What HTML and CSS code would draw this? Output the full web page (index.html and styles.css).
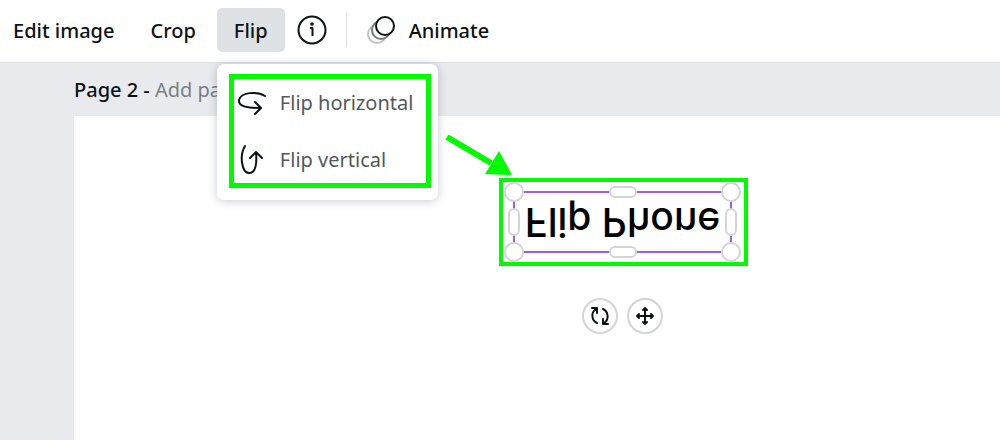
FILE: index.html
```
<!DOCTYPE html>
<html lang="en">
<head>
  <meta charset="UTF-8">
  <title>Flip Phone - Editor</title>
  <link rel="stylesheet" href="styles.css">
</head>
<body>
  <header class="toolbar">
    <button class="tool">Edit image</button>
    <button class="tool">Crop</button>
    <div class="dropdown">
      <button class="tool active" aria-expanded="true">Flip</button>
      <!-- Flip menu -->
      <div class="menu">
        <div class="menu-list">
          <button class="menu-item">
            <svg width="32" height="32" viewBox="0 0 32 32">
              <path d="M29 9C21 4 5 5 3 13C2 20 13 21 24 21M19 15L25 21L19 27"/>
            </svg>
            Flip horizontal
          </button>
          <button class="menu-item">
            <svg width="32" height="32" viewBox="0 0 32 32">
              <path d="M9 2C3 12 6 29 13 29C20 29 21 19 20 8M14 14L20 8L26 14"/>
            </svg>
            Flip vertical
          </button>
        </div>
      </div>
    </div>
    <button class="info" aria-label="Info">
      <svg width="30" height="30" viewBox="0 0 30 30">
        <circle cx="15" cy="15" r="13.5"/>
        <path class="stem" d="M13 13H15.5V21"/>
        <circle class="dot" cx="15" cy="9" r="1.8"/>
      </svg>
    </button>
    <span class="divider"></span>
    <button class="animate">
      <svg width="30" height="30" viewBox="0 0 30 30">
        <circle class="trail-far" cx="10" cy="19" r="9"/>
        <circle class="trail" cx="14" cy="15" r="9"/>
        <circle class="front" cx="18" cy="11" r="9"/>
      </svg>
      Animate
    </button>
  </header>

  <main class="workspace">
    <p class="page-title">Page 2 - <span>Add page title</span></p>
    <div class="page">
      <svg class="arrow" width="70" height="50" viewBox="0 0 70 50">
        <path d="M5 3L49 29" stroke="#00fb00" stroke-width="6"/>
        <path d="M57 17L70 41L43 40Z" fill="#00fb00"/>
      </svg>
      <div class="highlight">
        <div class="selection">
          <span class="flipped">Flip Phone</span>
          <i class="handle corner top left"></i>
          <i class="handle corner top right"></i>
          <i class="handle corner bottom left"></i>
          <i class="handle corner bottom right"></i>
          <i class="handle wide top"></i>
          <i class="handle wide bottom"></i>
          <i class="handle tall left"></i>
          <i class="handle tall right"></i>
        </div>
      </div>
      <div class="actions">
        <button class="round" aria-label="Rotate">
          <svg width="20" height="20" viewBox="0 0 20 20">
            <path d="M7 17C1 14 1 6 6 3M2 2H7V7M13 3C19 6 19 14 14 17M18 18H13V13"/>
          </svg>
        </button>
        <button class="round" aria-label="Move">
          <svg width="20" height="20" viewBox="0 0 20 20">
            <path d="M10 2V18M2 10H18M8 4L10 2L12 4M8 16L10 18L12 16M4 8L2 10L4 12M16 8L18 10L16 12"/>
          </svg>
        </button>
      </div>
    </div>
  </main>
</body>
</html>
```
FILE: styles.css
```
* {
  box-sizing: border-box;
}
body {
  margin: 0;
  height: 100vh;
  display: flex;
  flex-direction: column;
  padding-bottom: 2px;
  overflow: hidden;
  background: #fff;
  color: #0d1216;
  font-family: "Noto Sans", sans-serif;
  font-size: 20px;
}
button {
  border: none;
  background: none;
  padding: 0;
  color: inherit;
  font: inherit;
  white-space: nowrap;
  cursor: pointer;
}
svg {
  display: block;
  flex: none;
  fill: none;
  stroke: #0d1216;
  stroke-width: 2;
  stroke-linecap: round;
  stroke-linejoin: round;
}

/* Toolbar */
.toolbar {
  display: flex;
  align-items: center;
  padding: 8px 13px 10px;
  background: #fff;
  font-weight: 500;
}
.tool {
  height: 44px;
  border-radius: 5px;
  margin-right: 36px;
}
.active {
  padding: 0 17px;
  margin: 0 12px 0 -15px;
  background: #dfe2e5;
}
.dropdown {
  position: relative;
}
.stem {
  stroke-linecap: butt;
}
.dot {
  fill: #0d1216;
  stroke: none;
}
.divider {
  width: 1px;
  height: 34px;
  margin: 0 20px 0 19px;
  background: #dcdee1;
}
.animate {
  display: flex;
  align-items: center;
  gap: 12px;
}
.animate circle {
  fill: #fff;
}
.animate .trail-far {
  stroke: #bfc1c2;
}
.animate .trail {
  stroke: #777a7c;
}

/* Flip menu */
.menu {
  position: absolute;
  z-index: 2;
  top: 56px;
  left: -15px;
  padding: 10px 7px 12px 12px;
  border-radius: 7px;
  background: #fff;
  box-shadow: 0 1px 10px rgba(40, 50, 70, 0.25);
}
.menu-list {
  display: flex;
  flex-direction: column;
  gap: 10px;
  border: 5px solid #00fb00;
}
.menu-item {
  display: flex;
  align-items: center;
  gap: 12px;
  width: 100%;
  height: 47px;
  padding: 0 13px 0 2px;
  color: #55585b;
  font-weight: 400;
}

/* Workspace */
.workspace {
  flex: 1;
  display: flex;
  flex-direction: column;
  padding-left: 74px;
  background: #e9eaee;
  border-top: 1px solid #dfe0e4;
}
.page-title {
  margin: 0;
  line-height: 53px;
  font-weight: 500;
}
.page-title span {
  color: #7b7e82;
  font-weight: 400;
}
.page {
  flex: 1;
  position: relative;
  background: #fff;
}

/* Objects placed on the page */
.arrow {
  position: absolute;
  top: 18px;
  left: 368px;
  stroke: none;
  stroke-linecap: butt;
}
.highlight {
  position: absolute;
  top: 62px;
  left: 425px;
  padding: 9px 12px 9px 10px;
  border: 4px solid #00fb00;
}
.selection {
  position: relative;
  width: 219px;
  height: 62px;
  border: 2px solid #9563e0;
  text-align: center;
}
.flipped {
  display: block;
  color: #000;
  font-family: Inter, sans-serif;
  font-size: 39px;
  font-weight: 500;
  line-height: 58px;
  white-space: nowrap;
  transform: scaleY(-1);
}
.handle {
  position: absolute;
  border: 2px solid #d3d4d9;
  border-radius: 10px;
  background: #fff;
}
.corner {
  width: 20px;
  height: 20px;
}
.wide {
  width: 28px;
  height: 12px;
  left: calc(50% - 14px);
}
.tall {
  width: 12px;
  height: 28px;
  top: calc(50% - 14px);
}
.corner.top {
  top: -11px;
}
.corner.bottom {
  bottom: -11px;
}
.corner.left {
  left: -11px;
}
.corner.right {
  right: -11px;
}
.wide.top {
  top: -7px;
}
.wide.bottom {
  bottom: -7px;
}
.tall.left {
  left: -7px;
}
.tall.right {
  right: -7px;
}
.actions {
  position: absolute;
  top: 182px;
  left: 508px;
  display: flex;
  gap: 9px;
}
.round {
  display: flex;
  align-items: center;
  justify-content: center;
  width: 36px;
  height: 36px;
  border: 2px solid #d3d4d9;
  border-radius: 50%;
  background: #fff;
}
```
